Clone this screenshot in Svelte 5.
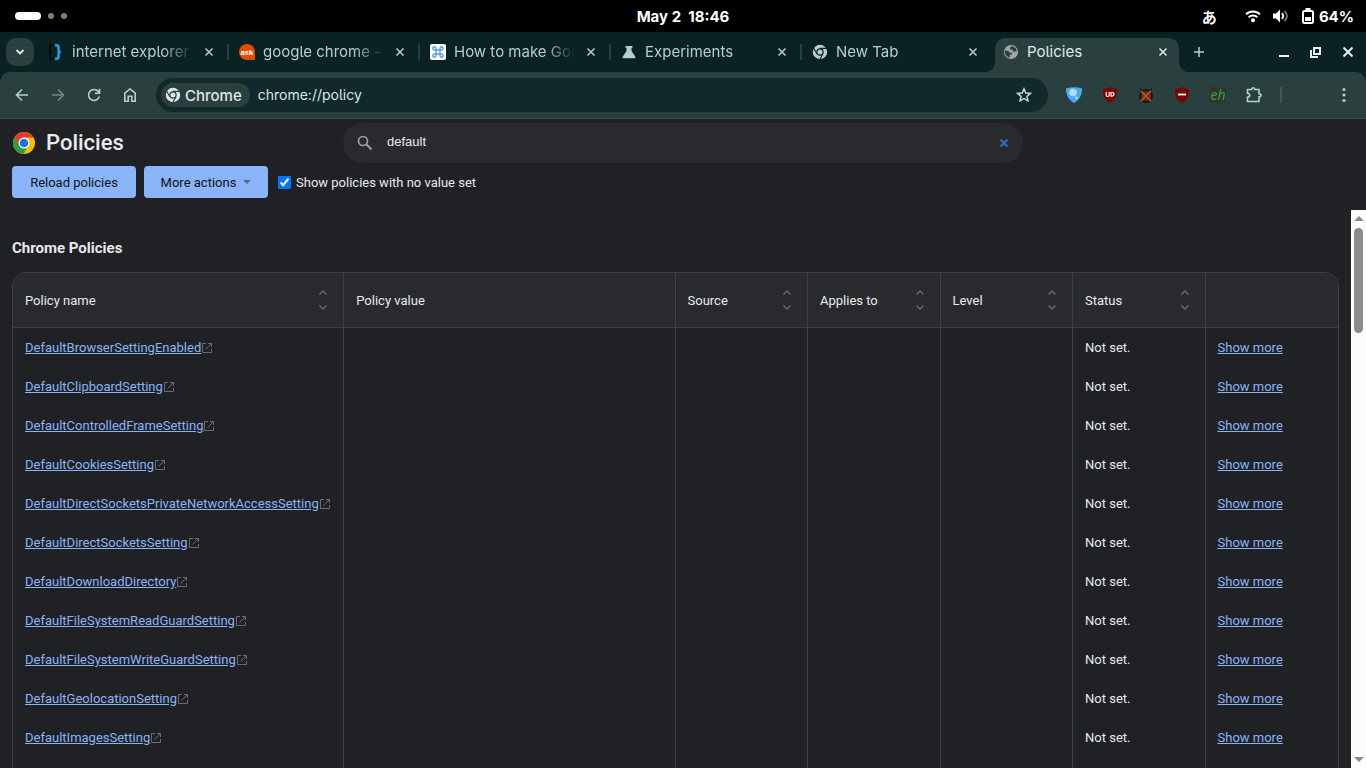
<script lang="ts">
	type Tab = { title: string; icon: string; active?: boolean };

	const tabs: Tab[] = [
		{ title: 'internet explorer', icon: 'braces' },
		{ title: 'google chrome - ', icon: 'ask' },
		{ title: 'How to make Goo', icon: 'command' },
		{ title: 'Experiments', icon: 'flask' },
		{ title: 'New Tab', icon: 'chrome' },
		{ title: 'Policies', icon: 'globe', active: true }
	];

	const columns = [
		{ label: 'Policy name', width: 'wide', sortable: true },
		{ label: 'Policy value', width: 'wide', sortable: false },
		{ label: 'Source', width: 'narrow', sortable: true },
		{ label: 'Applies to', width: 'narrow', sortable: true },
		{ label: 'Level', width: 'narrow', sortable: true },
		{ label: 'Status', width: 'narrow', sortable: true },
		{ label: '', width: 'narrow', sortable: false }
	];

	const policies = [
		'DefaultBrowserSettingEnabled',
		'DefaultClipboardSetting',
		'DefaultControlledFrameSetting',
		'DefaultCookiesSetting',
		'DefaultDirectSocketsPrivateNetworkAccessSetting',
		'DefaultDirectSocketsSetting',
		'DefaultDownloadDirectory',
		'DefaultFileSystemReadGuardSetting',
		'DefaultFileSystemWriteGuardSetting',
		'DefaultGeolocationSetting',
		'DefaultImagesSetting'
	];

	let query = $state('default');
	let showUnset = $state(true);

	const visible = $derived(
		showUnset ? policies.filter((p) => p.toLowerCase().includes(query.toLowerCase())) : []
	);
</script>

{#snippet chromeMark()}
	<svg class="mark" viewBox="0 0 16 16" width="16" height="16">
		<circle cx="8" cy="8" r="5.1" fill="none" stroke="currentColor" stroke-width="4.2" />
		<path d="M8 4.4h7M4.9 9.8 1.4 3.8M11.1 9.8l-3.5 6" stroke="var(--hole)" stroke-width="1.1" />
		<circle cx="8" cy="8" r="3.1" fill="currentColor" stroke="var(--hole)" stroke-width="1.2" />
	</svg>
{/snippet}

{#snippet cross()}
	<svg viewBox="0 0 10 10" width="10" height="10">
		<path d="m1.5 1.5 7 7m0-7-7 7" stroke="currentColor" stroke-width="1.5" />
	</svg>
{/snippet}

{#snippet favicon(name: string)}
	{#if name === 'chrome'}
		{@render chromeMark()}
	{:else}
		<svg viewBox="0 0 16 16" width="16" height="16">
			{#if name === 'braces'}
				<path d="M5.5 1H2v14h3.500" fill="none" stroke="#020606" stroke-width="2" />
				<path d="M7 1.200h1.500q2 0 2 2V6q0 2 2.300 2-2.300 0-2.300 2v2.800q0 2-2 2H7" fill="none" stroke="#12a5e8" stroke-width="2.600" />
				<circle cx="8" cy="5.500" r="1.200" fill="#020606" />
				<circle cx="8" cy="10.500" r="1.200" fill="#020606" />
			{:else if name === 'ask'}
				<circle cx="8" cy="8" r="8" fill="#e04c00" />
				<path d="M10 16h6V9z" fill="#e04c00" />
				<text x="8" y="10.5" text-anchor="middle" font-family="Open Sans, sans-serif" font-size="7.5" font-weight="700" fill="#fff">ask</text>
			{:else if name === 'command'}
				<rect x="0" y="0" width="16" height="16" rx="2" fill="#fff" />
				<path d="M6 6h4v4H6zM6 6H4.500A1.600 1.600 0 1 1 6 4.500zM10 6V4.500A1.600 1.600 0 1 1 11.500 6zM10 10h1.500A1.600 1.600 0 1 1 10 11.500zM6 10v1.500A1.600 1.600 0 1 1 4.500 10z" fill="none" stroke="#5b9bd8" stroke-width="1.400" />
			{:else if name === 'flask'}
				<path d="M4.500 2h7v1.800h-1V7l3.700 5.500q1 1.700-.9 1.700H2.700q-1.900 0-.9-1.700L5.500 7V3.800h-1z" fill="#b5cfce" />
			{:else}
				<circle cx="8" cy="8" r="7" fill="#a3a3ab" />
				<path d="M8 2.800 5.800 5.200 7.500 7.500l2.800-.6 1.500 1.300h2.600q-.3 2.600-2.200 4.300l-2.400-.9-.3-1.800-2.300-.6-1.800 1.300 1.900 1.600-.1 2.200Q2.800 13 2 9.500L1.800 6.800l3.600 1.400" fill="none" stroke="none" />
				<path d="M1.800 6.500 5 7q1.500.3 1.500 1.800H9v1.700H6.800v3.200l-1-.3Q2.300 12 2 8.500zM8.700 2.200Q7 3 7 4.300t1.600 1.400h1.200v1.700h3.800Q13.600 3.200 8.700 2.200z" fill="#29403f" />
			{/if}
		</svg>
	{/if}
{/snippet}

<div class="screen">
	<header class="system-bar">
		<div class="workspaces">
			<span class="current"></span>
			<span class="dot"></span>
			<span class="dot"></span>
		</div>
		<time class="clock">May 2&nbsp; 18:46</time>
		<div class="indicators">
			<span class="ime">あ</span>
			<svg viewBox="0 0 16 16" width="16" height="16">
				<path d="M1 6.300a10 10 0 0 1 14 0M3.700 9.200a6.200 6.200 0 0 1 8.600 0" fill="none" stroke="#fff" stroke-width="1.900" />
				<circle cx="8" cy="12.300" r="2" fill="#fff" />
			</svg>
			<svg class="volume" viewBox="0 0 16 16" width="16" height="16">
				<path d="M0 5.500h3L7 1.500v13l-4-4H0z" fill="#fff" />
				<path d="M9 5q2.200 3 0 6" fill="none" stroke="#fff" stroke-width="1.800" />
				<path d="M11.500 2.800q5 5.200 0 10.400" fill="none" stroke="#777" stroke-width="1.700" />
			</svg>
			<svg viewBox="0 0 14 16" width="14" height="16">
				<path d="M4.500 0h5v3h-5z" fill="#fff" />
				<rect x="2" y="3" width="10" height="12" rx="1.500" fill="none" stroke="#fff" stroke-width="2" />
				<path d="M4 9h6v4H4z" fill="#fff" />
			</svg>
			<span>64%</span>
		</div>
	</header>

	<nav class="tab-strip" aria-label="Tabs">
		<button class="tab-search" aria-label="Search tabs">
			<svg viewBox="0 0 10 10" width="10" height="10">
				<path d="m1.500 3 3.500 3.500L8.500 3" fill="none" stroke="#e0eceb" stroke-width="1.800" />
			</svg>
		</button>
		{#each tabs as tab (tab.title)}
			<div class="tab" class:active={tab.active}>
				{@render favicon(tab.icon)}
				<span class="tab-title">{tab.title}</span>
				<button class="tab-close" aria-label="Close tab">{@render cross()}</button>
			</div>
		{/each}
		<button class="new-tab" aria-label="New tab">
			<svg viewBox="0 0 12 12" width="12" height="12">
				<path d="M6 1v10M1 6h10" stroke="#b5cfce" stroke-width="1.500" />
			</svg>
		</button>
		<div class="window-controls">
			<button aria-label="Minimize">
				<svg viewBox="0 0 12 12" width="12" height="12"><path d="M1 10h10" stroke="currentColor" stroke-width="2" /></svg>
			</button>
			<button aria-label="Restore">
				<svg viewBox="0 0 12 12" width="12" height="12">
					<path d="M4 2h6v6H4z" fill="none" stroke="currentColor" stroke-width="2" />
					<path d="M1 4v7h7" fill="none" stroke="currentColor" stroke-width="2" />
				</svg>
			</button>
			<button aria-label="Close window">
				<svg viewBox="0 0 12 12" width="12" height="12"><path d="m1.500 1.500 9 9m0-9-9 9" stroke="currentColor" stroke-width="2" /></svg>
			</button>
		</div>
	</nav>

	<div class="toolbar">
		<button class="tool" aria-label="Back">
			<svg viewBox="0 0 16 16" width="16" height="16"><path d="M14 8H3M8 2.500 2.500 8 8 13.500" /></svg>
		</button>
		<button class="tool" aria-label="Forward" disabled>
			<svg viewBox="0 0 16 16" width="16" height="16"><path d="M2 8h11M8 2.500 13.500 8 8 13.500" /></svg>
		</button>
		<button class="tool" aria-label="Reload">
			<svg viewBox="0 0 16 16" width="16" height="16"><path d="M13.300 9.500A5.500 5.500 0 1 1 12.300 4.500L13.500 6M13.500 1.800V6.300H9" /></svg>
		</button>
		<button class="tool" aria-label="Home">
			<svg viewBox="0 0 16 16" width="16" height="16"><path d="M2.800 6.200 8 2l5.200 4.200v8.100H9.800V9.300H6.200v5H2.800z" /></svg>
		</button>
		<div class="omnibox">
			<button class="chip">{@render chromeMark()}Chrome</button>
			<input class="url" type="text" aria-label="Address" value="chrome://policy" />
			<button class="star" aria-label="Bookmark this page">
				<svg viewBox="0 0 16 16" width="16" height="16">
					<path d="m8 1.800 1.800 4.200 4.600.4-3.500 3 1.100 4.500L8 11.500 4 13.900l1.100-4.500-3.500-3L6.200 6z" />
				</svg>
			</button>
		</div>
		<button class="tool" aria-label="Shield">
			<svg viewBox="0 0 16 16" width="16" height="16" class="art">
				<path d="M0 1.500Q8-1 16 1.500 16.500 11 8 16-.5 11 0 1.500z" fill="#48a9f4" />
				<circle cx="7" cy="5.500" r="3.800" fill="#b4dcfb" />
				<circle cx="10.500" cy="10.800" r="1.600" fill="#a2d3fa" />
			</svg>
		</button>
		<button class="tool" aria-label="Content blocker">
			<svg viewBox="0 0 16 16" width="16" height="16" class="art">
				<path d="M8 0q3 2 7 2.200Q15.500 12 8 16 .5 12 1 2.200 5 2 8 0z" fill="#800000" />
				<path d="M4.200 5v3q0 1.500 1.500 1.500T7.200 8V5M8.500 5.500h1.500q2 0 2 1.800T10 9.200H9V5.500" fill="none" stroke="#fff" stroke-width="1.200" />
			</svg>
		</button>
		<button class="tool" aria-label="Script blocker">
			<svg viewBox="0 0 16 16" width="16" height="16" class="art">
				<path d="M2 5V1l3 2.200h6L14 1v4" fill="#18201f" />
				<circle cx="8" cy="9" r="6" fill="#29403f" stroke="#111717" stroke-width="1.800" />
				<path d="m3 4 10 10M13 4 3 14" stroke="#e53a0c" stroke-width="1.800" />
			</svg>
		</button>
		<button class="tool" aria-label="Ad blocker">
			<svg viewBox="0 0 16 16" width="16" height="16" class="art">
				<path d="M8 0q3 2 7 2.200Q15.500 12 8 16 .5 12 1 2.200 5 2 8 0z" fill="#800000" />
				<path d="M4 7.500h8" stroke="#fff" stroke-width="1.800" />
			</svg>
		</button>
		<button class="tool" aria-label="eh"><span class="eh">eh</span></button>
		<button class="tool" aria-label="Extensions">
			<svg viewBox="0 0 18 18" width="18" height="18">
				<path d="M2.500 3.500h4.200q0-1.800 1.500-1.800t1.500 1.800h4.300v4.300q2 0 2 1.500t-2 1.500v4.700H2.500v-4.200q2.300-.3 2.300-2t-2.300-2z" />
			</svg>
		</button>
		<span class="divider"></span>
		<button class="tool menu" aria-label="Chrome menu">
			<svg viewBox="0 0 16 16" width="16" height="16" class="art">
				<circle cx="8" cy="2.500" r="1.600" fill="#b5cfce" />
				<circle cx="8" cy="8" r="1.600" fill="#b5cfce" />
				<circle cx="8" cy="13.500" r="1.600" fill="#b5cfce" />
			</svg>
		</button>
	</div>

	<main class="page">
		<header class="page-header">
			<div class="brand">
				<svg viewBox="0 0 24 24" width="24" height="24">
					<circle cx="12" cy="12" r="11" fill="#fbbc04" />
					<path d="M2.500 6.500A11 11 0 0 1 21.500 6.500H12L7.200 14.700z" fill="#e33b2e" />
					<path d="M2.500 6.500 7.200 14.700l4.800 2.800 3.500-1.500-4 7A11 11 0 0 1 2.500 6.500z" fill="#2c9c4b" />
					<circle cx="12" cy="12" r="5.500" fill="#fff" />
					<circle cx="12" cy="12" r="4.300" fill="#1a73e8" />
				</svg>
				<h1>Policies</h1>
			</div>
			<div class="search">
				<svg viewBox="0 0 16 16" width="16" height="16">
					<circle cx="6" cy="6" r="4.500" fill="none" stroke="#9aa0a6" stroke-width="1.700" />
					<path d="m9.500 9.500 5 5" stroke="#9aa0a6" stroke-width="2" />
				</svg>
				<input type="text" aria-label="Filter policies by name" bind:value={query} />
				<button aria-label="Clear" onclick={() => (query = '')}>
					<svg viewBox="0 0 10 10" width="10" height="10">
						<path d="m1.500 1.500 7 7m0-7-7 7" stroke="#3467b8" stroke-width="2.400" />
					</svg>
				</button>
			</div>
		</header>

		<div class="actions">
			<button class="action">Reload policies</button>
			<button class="action">More actions <span class="caret"></span></button>
			<label>
				<input type="checkbox" bind:checked={showUnset} />
				Show policies with no value set
			</label>
		</div>

		<div class="scroll-area">
			<section class="policies">
				<h2>Chrome Policies</h2>
				<div class="table-frame">
					<table>
						<thead>
							<tr>
								{#each columns as col}
									<th class={col.width} scope="col">
										<div class="head-cell">
											{col.label}
											{#if col.sortable}
												<span class="sort">
													<button aria-label="Sort ascending">
														<svg viewBox="0 0 8 5" width="8" height="5"><path d="M.5 4.500 4 1l3.500 3.500" /></svg>
													</button>
													<button aria-label="Sort descending">
														<svg viewBox="0 0 8 5" width="8" height="5"><path d="M.5.5 4 4 7.500.5" /></svg>
													</button>
												</span>
											{/if}
										</div>
									</th>
								{/each}
							</tr>
						</thead>
						<tbody>
							{#each visible as name (name)}
								<tr>
									<td>
										<a href="#{name}">{name}</a><svg class="external" viewBox="0 0 10 10" width="10" height="10"><path d="M4 .5H.5v9h9V6M6 .5h3.500V4M9.500.5l-6 6" /></svg>
									</td>
									<td></td>
									<td></td>
									<td></td>
									<td></td>
									<td>Not set.</td>
									<td><a href="#more">Show more</a></td>
								</tr>
							{/each}
							<tr class="rest">
								{#each columns as _}<td></td>{/each}
							</tr>
						</tbody>
					</table>
				</div>
			</section>
			<div class="scrollbar">
				<span class="arrow up"></span>
				<span class="thumb"></span>
				<span class="arrow down"></span>
			</div>
		</div>
	</main>
</div>

<style>
	:global(body) {
		margin: 0;
		background: #202124;
	}

	.screen {
		height: 100vh;
		display: flex;
		flex-direction: column;
		overflow: hidden;
		background: #0a2223;
		font-family: Inter, 'Noto Sans CJK JP', sans-serif;
		font-size: 15px;
		color: #e8eaed;
	}

	button {
		display: flex;
		align-items: center;
		justify-content: center;
		padding: 0;
		border: 0;
		background: none;
		color: inherit;
		font: inherit;
	}

	svg {
		flex: none;
		display: block;
	}

	.system-bar {
		flex: none;
		display: grid;
		grid-template-columns: 1fr auto 1fr;
		align-items: center;
		height: 32px;
		padding: 0 12px;
		background: #000;
		color: #fff;
		font-weight: 700;
	}

	.workspaces {
		display: flex;
		align-items: center;
		gap: 7px;
		padding-left: 3px;
	}

	.current {
		width: 26px;
		height: 8px;
		border-radius: 4px;
		background: #fff;
	}

	.dot {
		width: 6px;
		height: 6px;
		border-radius: 50%;
		background: #808080;
	}

	.indicators {
		display: flex;
		align-items: center;
		justify-content: flex-end;
		gap: 4px;
	}

	.ime {
		margin-right: 24px;
	}

	.volume {
		margin: 0 8px;
	}

	.tab-strip {
		flex: none;
		display: flex;
		height: 40px;
		color: #b5cfce;
		font-feature-settings: 'cv05';
	}

	.tab-search {
		width: 28px;
		height: 28px;
		margin: 6px 3px 6px 6px;
		border-radius: 10px;
		background: #29403f;
	}

	.tab {
		--hole: #0a2223;
		position: relative;
		flex: 0 1 191px;
		min-width: 0;
		box-sizing: border-box;
		display: flex;
		align-items: center;
		gap: 8px;
		padding: 0 11px;
	}

	.tab:not(.active)::after {
		content: '';
		position: absolute;
		right: -1px;
		top: 12px;
		width: 2px;
		height: 16px;
		background: #29403f;
	}

	.tab:has(+ .active)::after {
		display: none;
	}

	.tab.active {
		flex-basis: 184px;
		margin: 6px 0 0 3px;
		padding: 0 8px 6px;
		border-radius: 10px 10px 0 0;
		background: #29403f;
		color: #e0e8e7;
	}

	/* flared feet of the selected tab */
	.tab.active::before,
	.tab.active::after {
		content: '';
		position: absolute;
		bottom: 0;
		width: 10px;
		height: 10px;
	}

	.tab.active::before {
		right: 100%;
		background: radial-gradient(circle at 0 0, transparent 10px, #29403f 10px);
	}

	.tab.active::after {
		left: 100%;
		background: radial-gradient(circle at 100% 0, transparent 10px, #29403f 10px);
	}

	.tab-title {
		flex: 1;
		min-width: 0;
		overflow: hidden;
		white-space: nowrap;
		line-height: 20px;
		mask-image: linear-gradient(to right, #000 75%, transparent);
	}

	.active .tab-title {
		mask-image: none;
	}

	.tab-close {
		width: 16px;
		height: 16px;
	}

	.new-tab {
		width: 28px;
		margin-left: 6px;
	}

	.window-controls {
		display: flex;
		gap: 12px;
		margin-left: auto;
		padding-right: 8px;
		color: #e8f0f0;
	}

	.window-controls button {
		width: 20px;
	}

	.toolbar {
		flex: none;
		display: flex;
		align-items: center;
		height: 46px;
		padding: 0 4px;
		background: #29403f;
		border-bottom: 1px solid #3d4a4b;
		border-radius: 10px 10px 0 0;
	}

	.tool {
		width: 36px;
		height: 34px;
	}

	.tool svg:not(.art),
	.star svg {
		fill: none;
		stroke: #b5cfce;
		stroke-width: 1.6;
	}

	.tool:disabled {
		opacity: 0.5;
	}

	.omnibox {
		flex: 1;
		display: flex;
		align-items: center;
		height: 34px;
		margin: 0 8px;
		padding: 0 16px 0 5px;
		box-sizing: border-box;
		border-radius: 17px;
		background: #11292a;
	}

	.chip {
		--hole: #29403f;
		gap: 4px;
		height: 24px;
		padding: 0 8px 0 4px;
		border-radius: 12px;
		background: #29403f;
		color: #e0e8e7;
		font-weight: 500;
	}

	.url {
		flex: 1;
		min-width: 0;
		padding: 0 8px 2px;
		border: 0;
		background: none;
		color: #dfe5e5;
		font: inherit;
		font-size: 14px;
		font-feature-settings: 'cv05';
	}

	.star svg {
		stroke: #d0dcdc;
		stroke-width: 1.4;
	}

	.eh {
		width: 16px;
		height: 16px;
		background: #333;
		color: #2fa83a;
		font: italic 14px/16px 'Noto Sans', sans-serif;
	}

	.divider {
		width: 2px;
		height: 16px;
		margin-left: 8px;
		background: #40585a;
	}

	.menu {
		margin-left: 44px;
	}

	.page {
		flex: 1;
		min-height: 0;
		display: flex;
		flex-direction: column;
		background: #202124;
		font-family: Roboto, sans-serif;
		font-size: 13px;
	}

	.page-header {
		flex: none;
		display: grid;
		grid-template-columns: 1fr minmax(0, 680px) 1fr;
		padding: 4px 12px 0;
	}

	.brand {
		display: flex;
		align-items: center;
		gap: 10px;
	}

	h1 {
		margin: 0;
		font-size: 22px;
		font-weight: 500;
		line-height: 24px;
	}

	.search {
		display: flex;
		align-items: center;
		height: 40px;
		padding: 0 14px;
		box-sizing: border-box;
		border-radius: 20px;
		background: #292a2d;
	}

	.search input {
		flex: 1;
		min-width: 0;
		padding: 0 14px 2px;
		border: 0;
		outline: 0;
		background: none;
		color: #e8eaed;
		font: 13px/16px 'Liberation Sans', Arial, sans-serif;
	}

	.search button {
		width: 10px;
		height: 16px;
	}

	.actions {
		flex: none;
		display: flex;
		align-items: center;
		gap: 8px;
		padding: 3px 12px 12px;
	}

	.action {
		gap: 7px;
		min-width: 124px;
		height: 32px;
		padding: 0 14px;
		border-radius: 4px;
		background: #8ab4f8;
		color: #111215;
	}

	.caret {
		border: 4px solid transparent;
		border-top-color: #5f6a7c;
		border-bottom: 0;
	}

	.actions label {
		display: flex;
		align-items: center;
		gap: 5px;
		margin-left: 2px;
	}

	.actions input {
		width: 13px;
		height: 13px;
		margin: 0;
		accent-color: #0075ff;
	}

	.scroll-area {
		flex: 1;
		min-height: 0;
		display: flex;
	}

	.policies {
		flex: 1;
		min-width: 0;
		overflow: hidden;
		padding: 28px 12px 0;
	}

	h2 {
		margin: 0 0 14px;
		font-size: 15px;
		font-weight: 700;
		line-height: 20px;
	}

	.table-frame {
		border: 1px solid #3f4042;
		border-radius: 14px 14px 0 0;
		overflow: hidden;
	}

	table {
		width: 100%;
		table-layout: fixed;
		border-collapse: separate;
		border-spacing: 0;
	}

	.wide {
		width: 25%;
	}

	.narrow {
		width: 10%;
	}

	th,
	td {
		box-sizing: border-box;
		padding: 0 12px;
		border-right: 1px solid #3f4042;
		text-align: left;
		white-space: nowrap;
	}

	th:last-child,
	td:last-child {
		border-right: 0;
	}

	th {
		height: 55px;
		background: #292a2d;
		border-bottom: 1px solid #3f4042;
		font-weight: 400;
	}

	td {
		height: 39px;
	}

	.head-cell {
		display: flex;
		align-items: center;
		justify-content: space-between;
	}

	.sort {
		display: flex;
		flex-direction: column;
		gap: 10px;
		margin-right: 4px;
	}

	.sort svg,
	.external {
		fill: none;
		stroke: #6a6c6f;
	}

	.sort svg {
		stroke-width: 1.4;
	}

	a {
		color: #8ab4f8;
		text-decoration: underline;
	}

	.external {
		display: inline-block;
		margin-left: 1px;
		vertical-align: -1px;
	}

	.scrollbar {
		flex: none;
		display: flex;
		flex-direction: column;
		align-items: center;
		width: 15px;
		padding: 6px 0;
		box-sizing: border-box;
		background: #fcfcfc;
	}

	.arrow {
		border: 5px solid transparent;
	}

	.up {
		border-top: 0;
		border-bottom-color: #8b8b8b;
	}

	.down {
		margin-top: auto;
		border-bottom: 0;
		border-top-color: #8b8b8b;
	}

	.thumb {
		width: 9px;
		height: 105px;
		margin-top: 7px;
		border-radius: 5px;
		background: #8b8b8b;
	}
</style>
